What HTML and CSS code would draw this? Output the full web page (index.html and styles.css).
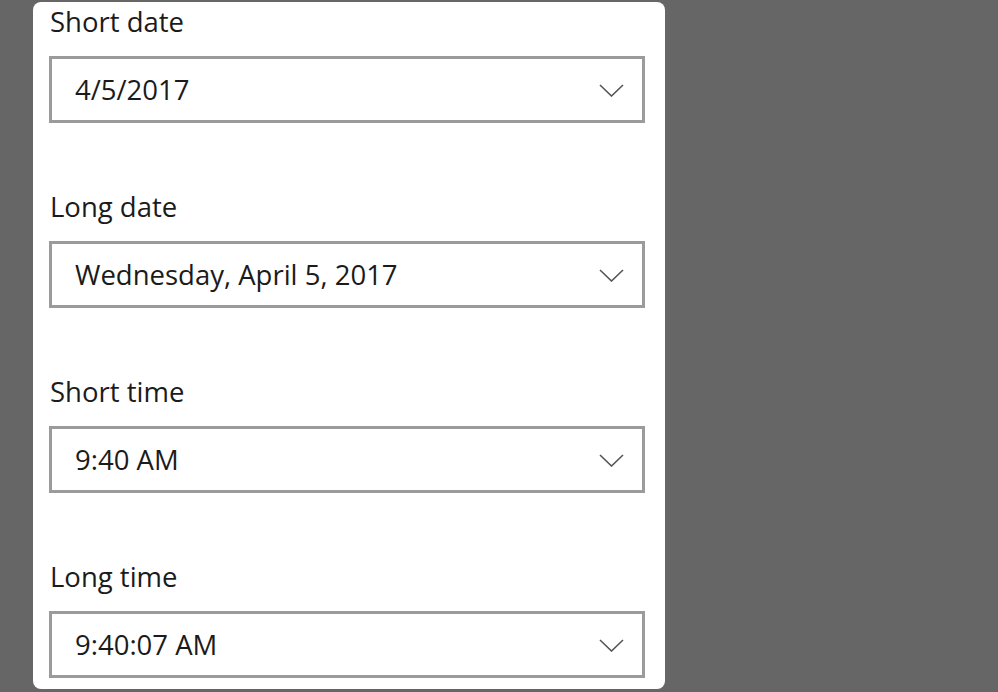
FILE: index.html
```html
<!DOCTYPE html>
<html>
<head>
<meta charset="utf-8">
<link rel="stylesheet" href="styles.css">
</head>
<body>
<div class="panel">
  <div class="field">
    <div class="label">Short date</div>
    <div class="select"><span class="value">4/5/2017</span>
      <svg class="chev" width="25" height="13" viewBox="0 0 25 13"><path d="M1 1 L12.5 12 L24 1" fill="none" stroke="#555" stroke-width="1.6"/></svg></div>
  </div>
  <div class="field">
    <div class="label">Long date</div>
    <div class="select"><span class="value">Wednesday, April 5, 2017</span>
      <svg class="chev" width="25" height="13" viewBox="0 0 25 13"><path d="M1 1 L12.5 12 L24 1" fill="none" stroke="#555" stroke-width="1.6"/></svg></div>
  </div>
  <div class="field">
    <div class="label">Short time</div>
    <div class="select"><span class="value">9:40 AM</span>
      <svg class="chev" width="25" height="13" viewBox="0 0 25 13"><path d="M1 1 L12.5 12 L24 1" fill="none" stroke="#555" stroke-width="1.6"/></svg></div>
  </div>
  <div class="field">
    <div class="label">Long time</div>
    <div class="select"><span class="value">9:40:07 AM</span>
      <svg class="chev" width="25" height="13" viewBox="0 0 25 13"><path d="M1 1 L12.5 12 L24 1" fill="none" stroke="#555" stroke-width="1.6"/></svg></div>
  </div>
</div>
</body>
</html>
```
FILE: styles.css
```css
html, body {
  margin: 0;
  padding: 0;
  background: #666666;
  height: 692px;
  overflow: hidden;
}
.panel {
  margin: 2px 0 0 33px;
  width: 632px;
  height: 687px;
  box-sizing: border-box;
  background: #ffffff;
  border-radius: 8px;
  padding: 0 20px 0 16px;
  display: flex;
  flex-direction: column;
  gap: 64px;
  font-family: "Open Sans", "Noto Sans", sans-serif;
  color: #1b1b1b;
}
.field {
  display: flex;
  flex-direction: column;
}
.label {
  height: 40px;
  line-height: 40px;
  font-size: 27.5px;
  margin-bottom: 14px;
  padding-left: 1px;
}
.select {
  height: 67px;
  box-sizing: border-box;
  border: 3px solid #9b9b9b;
  display: flex;
  align-items: center;
  justify-content: space-between;
  padding: 0 18px 0 23px;
}
.value {
  font-size: 27.5px;
}
.chev {
  display: block;
  margin-top: 2px;
}
```
